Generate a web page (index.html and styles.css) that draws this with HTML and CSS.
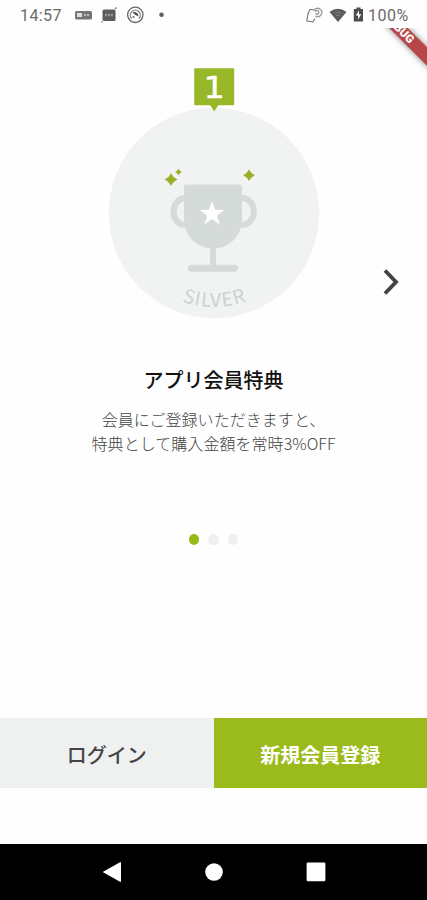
FILE: index.html
```html
<!DOCTYPE html>
<html lang="ja">
<head>
<meta charset="utf-8">
<title>アプリ会員特典</title>
<link rel="stylesheet" href="styles.css">
</head>
<body>
<div class="screen">
  <header class="status">
    <span class="clock">14:57</span>
    <svg class="status-left" width="96" height="20" viewBox="70 5 96 20">
      <rect x="75" y="11" width="17" height="8.500" rx="1.500" fill="#757575"/>
      <rect x="77" y="13" width="5" height="4" fill="#ddd"/><path d="M84 15h6" stroke="#bbb" stroke-width="2" stroke-dasharray="2 1"/>
      <rect x="102.500" y="9.500" width="13" height="11.500" rx="1.500" fill="#5c5c5c"/>
      <path d="M105 15h8" stroke="#999" stroke-width="2.500" stroke-dasharray="2 1"/><path d="M101.500 22.500l1-1M115 9l1.500-1.500" stroke="#777" stroke-width="1.200"/>
      <circle cx="135.300" cy="14.800" r="7.700" fill="none" stroke="#666" stroke-width="1.300"/>
      <path d="M131.500 18.500a5 5 0 1 1 7.500 0" fill="none" stroke="#777" stroke-width="1.200"/>
      <path d="M132.500 12.500c3-1.500 6 1 6 4l-3-1.500z" fill="#505050"/><circle cx="133.500" cy="17" r="1" fill="#666"/>
      <circle cx="161.500" cy="14.800" r="2.300" fill="#606060"/>
    </svg>
    <svg class="status-right" width="62" height="20" viewBox="304 5 62 20">
      <path d="M313 9.500h-3l-2 4-1.200 7.500 6 1 2.200-3.500" fill="none" stroke="#777" stroke-width="1.200" stroke-linejoin="round"/>
      <path d="M313 10.500q4-4 7.500-1t-1 7h-4M314.500 11.500q3-2 4 0t-1 2.500h-2" fill="none" stroke="#999" stroke-width="1.300"/>
      <path d="M329.500 12q8.500-6.500 17 0l-8.500 10z" fill="#5c5c5c"/><path d="M335 13q3-2 6 0M336 15.500q2-1 4 0" fill="none" stroke="#888" stroke-width=".8"/>
      <path d="M356.500 7.500h4v1.500h2.500v12.500h-9.200V9h2.700z" fill="#4b4b4b"/><path d="M359 10.500l-3.200 5h2.200v4l3.300-5.300H359z" fill="#fff"/>
    </svg>
    <span class="battery">100%</span>
  </header>
  <main class="page">
    <div class="debug-clip"><div class="debug">DEBUG</div></div>
    <div class="slide">
      <svg class="medal" width="220" height="260" viewBox="104 64 220 260">
        <defs><path id="arc" d="M120 213a94 94 0 0 0 188 0"/></defs>
        <circle cx="214" cy="213" r="105.300" fill="#f0f3f2"/>
        <path d="M195 68.300h38.400q.8 0 .8.800v35.400q0 .8-.8.800h-15.200l-4 6.200-4-6.200H195q-.8 0-.8-.8V69.100q0-.8.800-.8z" fill="#99b829"/>
        <text class="number" transform="translate(214.300 97.500) scale(1.120 1)" text-anchor="middle">1</text>
        <g fill="none" stroke="#d5dbd9" stroke-width="6">
          <path d="M188 198h-3a11.500 13.500 0 0 0 0 27h3M239 198h3a12 13.500 0 0 1 0 27h-3"/>
          <path d="M213 246v22"/><path d="M191.500 268.300h43" stroke-width="7" stroke-linecap="round"/>
        </g>
        <path d="M186 184.500h54q2 0 2 2V219c0 17-13 29.500-29 29.500s-29-12.500-29-29.500v-32.500q0-2 2-2z" fill="#d5dbd9"/>
        <path d="M212 201l3 8.800 9.300.1-7.400 5.600 2.800 8.900-7.700-5.300-7.500 5.300 2.700-8.900-7.400-5.600 9.200-.1z" fill="#fff"/>
        <g fill="#9aaf25">
          <path d="M171 173q2 4.500 6.500 6.500-4.500 2-6.500 6.500-2-4.500-6.500-6.500 4.500-2 6.500-6.500z"/>
          <path d="M178.500 168.800q1.200 2.200 3.400 3.200-2.200 1-3.400 3.200-1.200-2.200-3.400-3.200 2.200-1 3.400-3.200z"/>
          <path d="M249 169.500q1.900 3.900 5.800 5.800-3.900 1.900-5.800 5.800-1.900-3.900-5.800-5.800 3.900-1.900 5.800-5.800z"/>
        </g>
        <text class="rank" text-anchor="middle"><textPath href="#arc" startOffset="50%" textLength="66">SILVER</textPath></text>
      </svg>
      <h1>アプリ会員特典</h1>
      <p>会員にご登録いただきますと、<br>特典として購入金額を常時3%OFF</p>
      <svg class="next" width="20" height="30" viewBox="0 0 20 30"><path d="M3 3.500L14 15 3 26.500" fill="none" stroke="#444" stroke-width="3.900"/></svg>
    </div>
    <div class="dots"><i class="dot on"></i><i class="dot"></i><i class="dot"></i></div>
    <div class="actions">
      <button class="login">ログイン</button>
      <button class="register">新規会員登録</button>
    </div>
  </main>
  <nav class="nav">
    <svg width="20" height="22" viewBox="0 0 20 22"><path d="M1.500 11L18.500 1.500v19z" fill="#fff" stroke="#fff" stroke-linejoin="round"/></svg>
    <svg width="20" height="22" viewBox="0 0 20 22"><circle cx="10" cy="11" r="8.800" fill="#fff"/></svg>
    <svg width="20" height="22" viewBox="0 0 20 22"><rect x=".6" y="1.500" width="18.800" height="18.800" rx="1.200" fill="#fff"/></svg>
  </nav>
</div>
</body>
</html>
```
FILE: styles.css
```css
* { box-sizing: border-box; }
body { margin: 0; background: #fefefe; font-family: "Noto Sans CJK JP", sans-serif; }
.screen { width: 427px; height: 900px; display: flex; flex-direction: column; overflow: hidden; }
.status { height: 28px; flex: none; display: flex; align-items: center; padding: 2px 17px 0 20px; font: 16px Roboto, sans-serif; color: #6a6a6a; }
.clock { width: 50px; letter-spacing: .4px; }
.status-right { margin-left: auto; }
.battery { width: 42px; margin-left: 2px; letter-spacing: .5px; white-space: nowrap; }
.page { flex: 1; position: relative; display: flex; flex-direction: column; }
.debug-clip { position: absolute; top: 0; right: 0; width: 60px; height: 70px; overflow: hidden; }
.debug { position: absolute; left: -18px; top: -6px; width: 100px; height: 13px; transform: rotate(45deg); background: #b84648; color: #fff; font: 900 11.5px/13px Roboto, sans-serif; text-align: center; box-shadow: 0 0 6px rgba(0, 0, 0, .5); }
.slide { position: relative; height: 472px; padding-top: 36px; display: flex; flex-direction: column; align-items: center; }
.medal { flex: none; }
.number { font: 500 30px "DejaVu Sans", sans-serif; fill: #fff; stroke: #fff; stroke-width: .4; }
.rank { font: 19px "Noto Sans CJK JP", sans-serif; fill: #ccd2d0; }
h1 { margin: 41px 0 0; font-size: 20px; line-height: 30px; font-weight: 500; color: #111; }
p { margin: 12px 0 0; font-size: 16px; line-height: 24px; font-weight: 300; color: #444; text-align: center; white-space: nowrap; letter-spacing: .05px; }
.next { position: absolute; right: 25px; top: 239px; }
.dots { margin-top: 34px; display: flex; justify-content: center; gap: 9px; }
.dot { width: 10.500px; height: 10.500px; border-radius: 50%; background: #eef0ef; }
.dot.on { background: #9aba1a; }
.actions { margin-top: auto; margin-bottom: 56px; height: 70px; display: flex; }
button { flex: 1; border: 0; padding: 2px 0 0; font: 700 20px "Noto Sans CJK JP", sans-serif; }
.login { background: #eef1f0; color: #444; font-weight: 500; }
.register { background: #9bbb1c; color: #fff; }
.nav { height: 56px; flex: none; background: #000; display: flex; justify-content: center; align-items: center; gap: 82px; }
```
